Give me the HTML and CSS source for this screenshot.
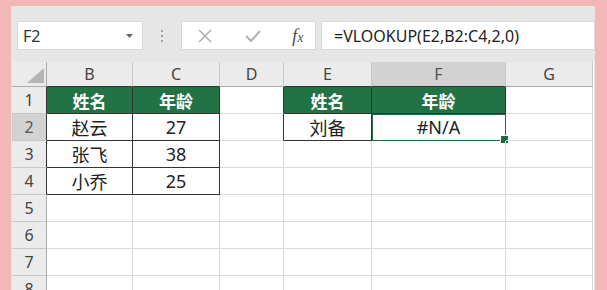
FILE: index.html
```html
<!DOCTYPE html>
<html lang="zh">

<head>
    <meta charset="utf-8">
    <title>VLOOKUP</title>
    <link rel="stylesheet" href="styles.css">
</head>

<body>
    <div class="window">
        <div class="formula-bar">
            <div class="name-box">
                <span>F2</span>
                <svg width="7" height="4" viewBox="0 0 7 4"><path d="M0 0h7L3.5 4z" fill="#666"/></svg>
            </div>
            <div class="grip"><i></i><i></i><i></i></div>
            <div class="fx-buttons">
                <svg class="ico" width="14" height="14" viewBox="0 0 14 14"><path d="M1 1l12 12M13 1L1 13" stroke="#a8a8a8" stroke-width="1.4" fill="none"/></svg>
                <svg class="ico" width="16" height="12" viewBox="0 0 16 12"><path d="M1 6l5 5L15 1" stroke="#b0b0b0" stroke-width="2" fill="none"/></svg>
                <span class="fx">f<sub>x</sub></span>
            </div>
            <div class="formula">=VLOOKUP(E2,B2:C4,2,0)</div>
        </div>

        <div class="sheet">
            <!-- column headers -->
            <div class="c hd corner">
                <svg width="17" height="15" viewBox="0 0 17 15"><path d="M17 0v15H0z" fill="#b5b5b5"/></svg>
            </div>
            <div class="c hd top">B</div>
            <div class="c hd top">C</div>
            <div class="c hd">D</div>
            <div class="c hd top">E</div>
            <div class="c hd top on">F</div>
            <div class="c hd">G</div>

            <!-- row 1 -->
            <div class="c rh left">1</div>
            <div class="c box green">姓名</div>
            <div class="c box green">年龄</div>
            <div class="c left-of"></div>
            <div class="c box green">姓名</div>
            <div class="c box green">年龄</div>
            <div class="c"></div>

            <!-- row 2 -->
            <div class="c rh left on">2</div>
            <div class="c box">赵云</div>
            <div class="c box">27</div>
            <div class="c left-of"></div>
            <div class="c box">刘备</div>
            <div class="c box active">#N/A</div>
            <div class="c"></div>

            <!-- row 3 -->
            <div class="c rh left">3</div>
            <div class="c box">张飞</div>
            <div class="c box">38</div>
            <div class="c"></div>
            <div class="c"></div>
            <div class="c"></div>
            <div class="c"></div>

            <!-- row 4 -->
            <div class="c rh left">4</div>
            <div class="c box">小乔</div>
            <div class="c box">25</div>
            <div class="c"></div>
            <div class="c"></div>
            <div class="c"></div>
            <div class="c"></div>

            <div class="c rh">5</div>
            <div class="c"></div><div class="c"></div><div class="c"></div><div class="c"></div><div class="c"></div><div class="c"></div>
            <div class="c rh">6</div>
            <div class="c"></div><div class="c"></div><div class="c"></div><div class="c"></div><div class="c"></div><div class="c"></div>
            <div class="c rh">7</div>
            <div class="c"></div><div class="c"></div><div class="c"></div><div class="c"></div><div class="c"></div><div class="c"></div>
            <div class="c rh">8</div>
            <div class="c"></div><div class="c"></div><div class="c"></div><div class="c"></div><div class="c"></div><div class="c"></div>
        </div>
    </div>
</body>

</html>
```

FILE: styles.css
```css
* {
    box-sizing: border-box;
}

body {
    margin: 0;
    height: 290px;
    overflow: hidden;
    background-color: #f2b7b9;
    font-family: "Noto Sans", "Noto Sans CJK SC", sans-serif;
    color: #222;
}

.window {
    margin: 6px 0 0 11px;
    width: 584px;
    height: 290px;
    background-color: #e6e6e6;
}

/* formula bar */

.formula-bar {
    display: flex;
    align-items: center;
    padding-top: 15px;
    margin-bottom: 12px;
}

.name-box,
.fx-buttons,
.formula {
    height: 29px;
    background-color: #fff;
    border: 1px solid #d8d8d8;
    display: flex;
    align-items: center;
}

.name-box {
    margin-left: 6px;
    width: 126px;
    padding: 0 9px 0 5px;
    justify-content: space-between;
    font-size: 16px;
    color: #333;
}

.grip {
    width: 38px;
    display: flex;
    flex-direction: column;
    align-items: center;
    gap: 3px;
}

.grip i {
    width: 2px;
    height: 2px;
    background-color: #a0a0a0;
}

.fx-buttons {
    width: 135px;
    padding-left: 16px;
}

.fx-buttons .ico {
    margin-right: 33px;
}

.fx-buttons .ico + .ico {
    margin-right: 31px;
}

.fx {
    font-family: "Liberation Serif", serif;
    font-style: italic;
    font-size: 19px;
    color: #555;
}

.fx sub {
    font-size: 14px;
    vertical-align: 0;
}

.formula {
    flex: 1;
    margin-left: 5px;
    padding-left: 12px;
    font-size: 16px;
    color: #222;
}

/* sheet */

.sheet {
    margin-left: 1px;
    width: 582px;
    display: grid;
    grid-template-columns: 35px 86px 87px 64px 88px 134px 87px;
    grid-template-rows: 25px repeat(8, 27px);
    background-color: #fff;
}

.c {
    display: flex;
    align-items: center;
    justify-content: center;
    border-right: 1px solid #d9d9d9;
    border-bottom: 1px solid #d9d9d9;
    font-size: 18px;
    position: relative;
}

.hd {
    background-color: #ebebeb;
    color: #444;
    font-size: 16px;
    border-right-color: #c8c8c8;
    border-bottom-color: #ababab;
}

.corner {
    justify-content: flex-end;
    align-items: flex-end;
    padding: 0 2px 3px 0;
    border-right-color: #ababab;
}

.rh {
    background-color: #ebebeb;
    color: #444;
    font-size: 16px;
    border-right-color: #ababab;
    border-bottom-color: #c8c8c8;
}

.on {
    background-color: #d2d2d2;
    color: #555;
}

/* table frames */

.box {
    border-right-color: #333;
    border-bottom-color: #333;
}

.top {
    border-bottom-color: #333;
}

.left,
.left-of {
    border-right-color: #333;
}

.green {
    background-color: #217346;
    color: #fff;
    font-weight: bold;
    font-size: 17px;
}

.active {
    border-right-color: #1d6b40;
    border-bottom-color: #1d6b40;
    box-shadow: inset 1px 1px 0 #1d6b40;
}

.active::after {
    content: "";
    position: absolute;
    right: -4px;
    bottom: -4px;
    width: 7px;
    height: 7px;
    background-color: #1d6b40;
    border: 1px solid #fff;
}
```
